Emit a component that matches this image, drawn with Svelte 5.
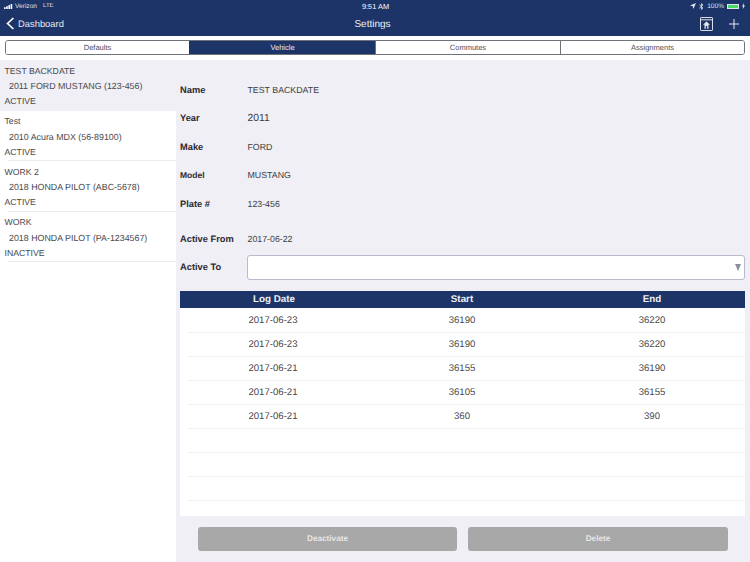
<script>
  const tabs = ['Defaults', 'Vehicle', 'Commutes', 'Assignments'];
  const vehicles = [
    { name: 'TEST BACKDATE', car: '2011 FORD MUSTANG (123-456)', status: 'ACTIVE', selected: true },
    { name: 'Test', car: '2010 Acura MDX (56-89100)', status: 'ACTIVE' },
    { name: 'WORK 2', car: '2018 HONDA PILOT (ABC-5678)', status: 'ACTIVE' },
    { name: 'WORK', car: '2018 HONDA PILOT (PA-1234567)', status: 'INACTIVE' }
  ];
  const fields = [
    { label: 'Name', value: 'TEST BACKDATE' },
    { label: 'Year', value: '2011', big: true },
    { label: 'Make', value: 'FORD' },
    { label: 'Model', value: 'MUSTANG', small: true },
    { label: 'Plate #', value: '123-456' }
  ];
  const logs = [
    ['2017-06-23', '36190', '36220'],
    ['2017-06-23', '36190', '36220'],
    ['2017-06-21', '36155', '36190'],
    ['2017-06-21', '36105', '36155'],
    ['2017-06-21', '360', '390'],
    ['', '', ''],
    ['', '', ''],
    ['', '', '']
  ];
</script>

<div class="page">
  <header class="top">
    <div class="status">
      <div class="status-left">
        <svg width="9" height="5" viewBox="0 0 9 5" fill="#fff"><rect x="0" y="3.2" width="1.6" height="1.8"/><rect x="2.2" y="2.2" width="1.6" height="2.8"/><rect x="4.4" y="1.1" width="1.6" height="3.9"/><rect x="6.6" y="0" width="1.6" height="5"/></svg>
        <span class="car-name">Verizon</span><span class="lte">LTE</span>
      </div>
      <div class="clock">9:51 AM</div>
      <div class="status-right">
        <svg width="6" height="6" viewBox="0 0 6 6" fill="#dfe3ec"><path d="M6 0 3.4 6 2.8 3.2 0 2.6z"/></svg>
        <svg width="5" height="7" viewBox="0 0 5 7" fill="none" stroke="#dfe3ec" stroke-width=".8"><path d="M.4 1.9 4 5 2.4 6.6V.4L4 2 .4 5.1"/></svg>
        <span>100%</span>
        <span class="batt"></span>
        <svg width="3" height="6" viewBox="0 0 3 6" fill="#dfe3ec"><path d="M2 0 0 3.4h1.1L.9 6 3 2.5H1.8z"/></svg>
      </div>
    </div>
    <nav class="nav">
      <div class="back">
        <svg width="9" height="13" viewBox="0 0 9 13" fill="none" stroke="#fff" stroke-width="1.7"><path d="M7.4 1 1.6 6.5l5.8 5.5"/></svg>
        <span>Dashboard</span>
      </div>
      <div class="title">Settings</div>
      <div class="actions">
        <svg width="13" height="14" viewBox="0 0 13 14" fill="none" stroke="#f2f3f6" stroke-width=".9"><rect x=".5" y=".5" width="12" height="13" rx=".6"/><path d="M.5 2.8h12"/><path d="M6.5 4.4 3 7.8h1.5v4h4v-4H10z" fill="#e4e6ec" stroke="none"/><rect x="5.8" y="9" width="1.4" height="2.8" fill="#1d3468" stroke="none"/></svg>
        <svg width="10" height="10" viewBox="0 0 10 10" stroke="#e6e9f0" stroke-width="1"><path d="M5 0v10M0 5h10"/></svg>
      </div>
    </nav>
  </header>

  <div class="segbar">
    <div class="seg">
      {#each tabs as t, i}
        <div class="tab" class:on={i === 1}>{t}</div>
      {/each}
    </div>
  </div>

  <main class="body">
    <aside class="list">
      {#each vehicles as v}
        <div class="item" class:sel={v.selected}>
          <div>{v.name}</div>
          <div class="car">{v.car}</div>
          <div>{v.status}</div>
        </div>
      {/each}
    </aside>

    <section class="detail">
      <div class="fields">
        {#each fields as f}
          <div class="field">
            <span class="label" class:small={f.small}>{f.label}</span>
            <span class="val" class:big={f.big}>{f.value}</span>
          </div>
        {/each}
      </div>
      <div class="field from">
        <span class="label">Active From</span>
        <span class="val">2017-06-22</span>
      </div>
      <div class="field to">
        <span class="label">Active To</span>
        <div class="select"><span class="arrow"></span></div>
      </div>

      <div class="thead">
        <span>Log Date</span><span>Start</span><span>End</span>
      </div>
      <div class="tbody">
        {#each logs as r}
          <div class="row">
            {#each r as c}<span>{c}</span>{/each}
          </div>
        {/each}
      </div>

      <div class="buttons">
        <div class="btn">Deactivate</div>
        <div class="btn">Delete</div>
      </div>
    </section>
  </main>
</div>

<style>
  :global(body) { margin: 0; }
  .page {
    width: 750px; height: 562px; overflow: hidden;
    display: flex; flex-direction: column;
    font-family: "Liberation Sans", Arial, sans-serif;
    text-rendering: geometricPrecision;
    background: #fff; color: #48484c;
    opacity: .999;
  }
  .top { height: 36px; background: #1d3468; color: #fff; flex: none; }
  .status {
    height: 12px; display: grid; grid-template-columns: 1fr auto 1fr; align-items: center;
    font-size: 6.6px; color: #dfe3ec; padding: 0 5px 0 4px;
  }
  .status-left { display: flex; align-items: center; }
  .car-name { margin-left: 2px; }
  .lte { margin-left: 6px; font-size: 6px; }
  .clock { color: #fff; font-size: 7.4px; margin-left: 2px; }
  .status-right { display: flex; align-items: center; justify-content: flex-end; gap: 3px; }
  .batt {
    width: 12px; height: 5px; background: #4cd964; border: .5px solid #dfe3ec;
    box-sizing: border-box;
  }
  .nav {
    height: 24px; display: grid; grid-template-columns: 1fr auto 1fr; align-items: center;
    padding: 0 11px 1px 6px; box-sizing: border-box;
  }
  .back { display: flex; align-items: center; gap: 3px; font-size: 9.4px; color: #e8eaf0; }
  .title { font-size: 10px; color: #f0f2f6; padding-top: 1px; }
  .actions { display: flex; justify-content: flex-end; align-items: center; gap: 16px; }
  .segbar { height: 24px; flex: none; padding: 4px 5px 5px; box-sizing: border-box; background: #fff; }
  .seg {
    height: 15px; display: grid; grid-template-columns: 183px 186px 185px 1fr;
    border: 1px solid #6f7278; border-radius: 3px; overflow: hidden; box-sizing: border-box;
  }
  .tab {
    display: flex; align-items: center; justify-content: center;
    font-size: 7.5px; color: #4a5060; border-left: 1px solid #6f7278; background: #fff;
  }
  .tab:first-child { border-left: 0; }
  .tab.on { background: #1d3468; color: #eef0f4; border-left-color: #1d3468; }
  .body { flex: 1; display: flex; min-height: 0; }
  .list { width: 176px; flex: none; background: #fff; font-size: 8.7px; }
  .item {
    height: 50.5px; box-sizing: border-box; padding: 3px 0 0 4.5px;
    display: grid; grid-auto-rows: 15.3px; align-content: center;
    position: relative; line-height: 15px;
  }
  .item::after {
    content: ""; position: absolute; left: 8px; right: 0; bottom: 0; height: 1px; background: #ececf0;
  }
  .item.sel { background: #efeff5; }
  .item.sel::after { display: none; }
  .car { padding-left: 4.5px; font-size: 8.85px; }
  .detail {
    flex: 1; background: #efeff5; padding: 0 5px 0 4px;
    display: flex; flex-direction: column; min-width: 0;
  }
  .fields { padding-top: 15.3px; }
  .field { display: flex; align-items: center; height: 28.6px; }
  .label { width: 67.5px; flex: none; font-weight: 700; font-size: 9.3px; color: #2b2b30; }
  .label.small { font-size: 8.5px; }
  .val { font-size: 8.8px; color: #3c3c40; }
  .val.big { font-size: 10.3px; }
  .from { margin-top: 6.7px; }
  .to { height: 25px; margin-top: 1px; }
  .select {
    flex: 1; height: 25px; box-sizing: border-box; background: #fff; margin-left: -.5px;
    border: 1px solid #b9bad0; border-radius: 3px; position: relative;
  }
  .arrow {
    position: absolute; right: 3px; top: 8px; width: 0; height: 0;
    border-left: 3.5px solid transparent; border-right: 3.5px solid transparent;
    border-top: 7px solid #8a8f99;
  }
  .thead {
    margin-top: 11px; height: 17px; flex: none; background: #1d3468; color: #eef0f4;
    font-weight: 700; font-size: 9.8px;
    display: grid; grid-template-columns: 188px 188px 1fr; align-items: center; text-align: center;
  }
  .thead span:last-child { padding-left: 3px; }
  .tbody { background: #fff; padding: 1px 0 15px 8px; flex: none; }
  .row {
    height: 24px; box-sizing: border-box; border-bottom: 1px solid #f0f0f3;
    display: grid; grid-template-columns: 170px 208px 172px 1fr; align-items: center; text-align: center;
    font-size: 9.6px; color: #48484c;
  }
  .buttons { margin-top: 11px; padding: 0 17px 0 18px; display: grid; grid-template-columns: 259px 1fr; gap: 11px; }
  .btn {
    height: 24px; background: #a8a8a8; border-radius: 3px; color: #e6e6e6;
    font-weight: 700; font-size: 8.2px;
    display: flex; align-items: center; justify-content: center;
  }
</style>
